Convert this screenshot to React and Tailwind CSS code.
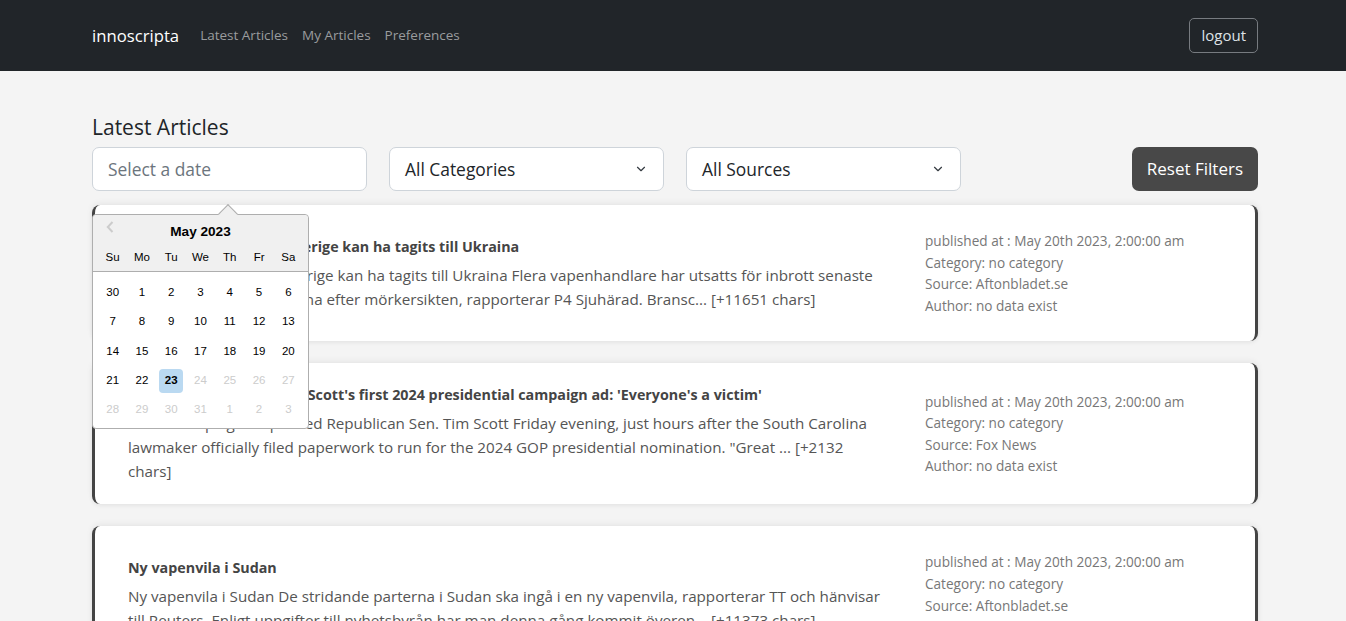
import { ChevronDown } from 'lucide-react';

const articles = [
  {
    title: 'Stulna jaktvapen från Sverige kan ha tagits till Ukraina',
    description:
      'Stulna jaktvapen från Sverige kan ha tagits till Ukraina Flera vapenhandlare har utsatts för inbrott senaste veckorna, oftast i timmarna efter mörkersikten, rapporterar P4 Sjuhärad. Bransc... [+11651 chars]',
    source: 'Aftonbladet.se',
  },
  {
    title: "Fox News Exclusive - Tim Scott's first 2024 presidential campaign ad: 'Everyone's a victim'",
    description:
      'A new campaign ad praised Republican Sen. Tim Scott Friday evening, just hours after the South Carolina lawmaker officially filed paperwork to run for the 2024 GOP presidential nomination. "Great ... [+2132 chars]',
    source: 'Fox News',
  },
  {
    title: 'Ny vapenvila i Sudan',
    description:
      'Ny vapenvila i Sudan De stridande parterna i Sudan ska ingå i en ny vapenvila, rapporterar TT och hänvisar till Reuters. Enligt uppgifter till nyhetsbyrån har man denna gång kommit överen... [+11373 chars]',
    source: 'Aftonbladet.se',
  },
];

const weeks = [
  [30, 1, 2, 3, 4, 5, 6],
  [7, 8, 9, 10, 11, 12, 13],
  [14, 15, 16, 17, 18, 19, 20],
  [21, 22, 23, 24, 25, 26, 27],
  [28, 29, 30, 31, 1, 2, 3],
];

function DatePicker() {
  return (
    <div className="absolute left-0 top-[67px] z-10 w-[217px] rounded-[4px] border border-[#aeaeae] bg-white font-['Liberation_Sans',Arial,sans-serif] text-[11.5px] text-black">
      <div className="absolute -top-[8px] left-[128px] h-[14px] w-[14px] rotate-45 border-l border-t border-[#aeaeae] bg-[#f0f0f0]" />
      <div className="relative rounded-t-[4px] border-b border-[#aeaeae] bg-[#f0f0f0] pt-[8px]">
        <svg className="absolute left-[13px] top-[6px]" width="8" height="12" viewBox="0 0 8 12" fill="none">
          <path d="M6.5 1 L1.8 6 L6.5 11" stroke="#ccc" strokeWidth="2" />
        </svg>
        <div className="text-center text-[13.6px] font-bold leading-[18px]">May 2023</div>
        <div className="mt-[5px] flex justify-center px-[5px] pb-[3px]">
          {['Su', 'Mo', 'Tu', 'We', 'Th', 'Fr', 'Sa'].map((d) => (
            <div key={d} className="w-[29.3px] text-center leading-[22px]">
              {d}
            </div>
          ))}
        </div>
      </div>
      <div className="flex flex-col px-[5px] pb-[4px] pt-[6px]">
        {weeks.map((week, wi) => (
          <div key={wi} className="flex justify-center">
            {week.map((day, di) => {
              const muted = wi === 4 || (wi === 3 && day > 23);
              const selected = wi === 3 && day === 23;
              return (
                <div key={di} className="flex h-[29.3px] w-[29.3px] items-center justify-center">
                  <span
                    className={`flex h-[24px] w-[24px] items-center justify-center rounded-[4px] ${
                      selected ? 'bg-[#bad9f1] font-bold' : ''
                    } ${muted ? 'text-[#ccc]' : ''}`}
                  >
                    {day}
                  </span>
                </div>
              );
            })}
          </div>
        ))}
      </div>
    </div>
  );
}

function ArticleCard({ article }) {
  return (
    <div className="flex items-center rounded-lg border-x-[3px] border-[#444] bg-white py-[21px] pl-[33px] pr-[20px] shadow-[0_-2px_6px_rgba(0,0,0,0.06),0_2px_4px_rgba(0,0,0,0.05)]">
      <div className="w-[762px]">
        <h5 className="mb-[6px] text-[14.3px] font-bold leading-[21px] text-[#444]">{article.title}</h5>
        <p className="text-[15.2px] leading-[24px] text-[#555]">{article.description}</p>
      </div>
      <div className="ml-[35px] py-[4px] text-[13.6px] leading-[21.6px] text-[#777]">
        <div>published at : May 20th 2023, 2:00:00 am</div>
        <div>Category: no category</div>
        <div>Source: {article.source}</div>
        <div>Author: no data exist</div>
      </div>
    </div>
  );
}

export default function App() {
  return (
    <div className="min-h-screen bg-[#f4f4f4] font-['Open_Sans',sans-serif]">
      <nav className="h-[71px] bg-[#212529]">
        <div className="ml-[92px] flex h-full w-[1166px] items-center">
          <span className="mr-[14px] text-[16.7px] text-white">innoscripta</span>
          <a className="px-[7px] text-[13.5px] text-[#9a9c9e]">Latest Articles</a>
          <a className="px-[7px] text-[13.5px] text-[#9a9c9e]">My Articles</a>
          <a className="px-[7px] text-[13.5px] text-[#9a9c9e]">Preferences</a>
          <button className="ml-auto h-[35px] rounded-[5px] border border-[#777b80] px-[11px] text-[15px] text-[#dee2e6]">
            logout
          </button>
        </div>
      </nav>
      <main className="ml-[92px] w-[1166px] pt-[43px]">
        <h1 className="mb-[7px] text-[21px] font-medium leading-[26px] text-[#212529]">Latest Articles</h1>
        <div className="relative flex items-center">
          <input
            placeholder="Select a date"
            className="h-[44px] w-[275px] rounded-[7px] border border-[#ced4da] bg-white px-[15px] text-[17.4px] placeholder:text-[#6c757d]"
          />
          <div className="ml-[22px] flex h-[44px] w-[275px] items-center justify-between rounded-[7px] border border-[#ced4da] bg-white px-[15px] text-[17.4px] text-[#212529]">
            All Categories
            <ChevronDown size={14} strokeWidth={2} className="text-[#343a40]" />
          </div>
          <div className="ml-[22px] flex h-[44px] w-[275px] items-center justify-between rounded-[7px] border border-[#ced4da] bg-white px-[15px] text-[17.4px] text-[#212529]">
            All Sources
            <ChevronDown size={14} strokeWidth={2} className="text-[#343a40]" />
          </div>
          <button className="ml-auto h-[44px] rounded-[7px] bg-[#484848] px-[15px] text-[17px] text-white">
            Reset Filters
          </button>
          <DatePicker />
        </div>
        <div className="mt-[14px] flex flex-col gap-[22px]">
          {articles.map((a, i) => (
            <ArticleCard key={i} article={a} />
          ))}
        </div>
      </main>
    </div>
  );
}
